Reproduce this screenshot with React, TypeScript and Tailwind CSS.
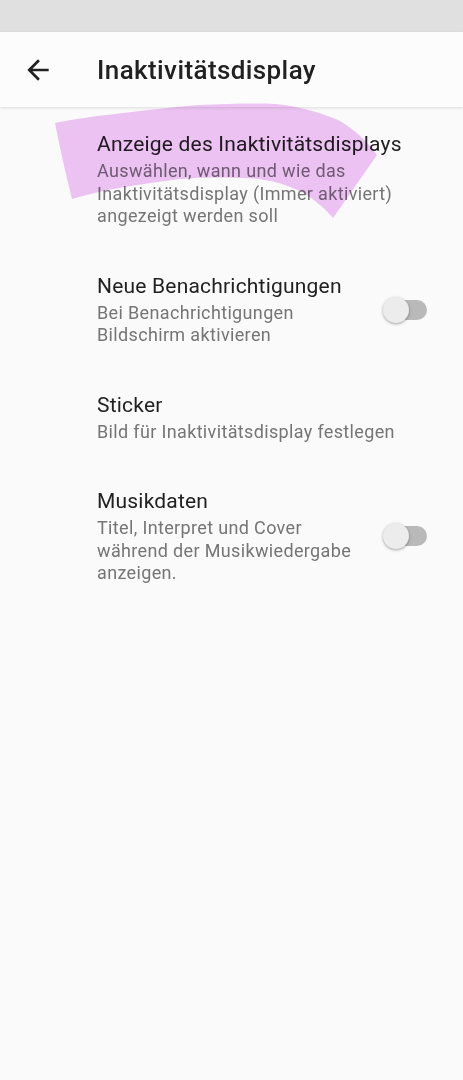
import React from "react";

function Toggle() {
  return (
    <div className="relative w-[44px] h-[26px] ml-[16px] shrink-0 flex items-center">
      <div className="absolute left-[8px] right-0 h-[20px] rounded-full bg-[#b9b9b9]" />
      <div className="absolute left-0 top-0 w-[26px] h-[26px] rounded-full bg-[#ececec] shadow-[0_1px_3px_rgba(0,0,0,0.35)]" />
    </div>
  );
}

function Item({ title, sub, toggle }: { title: string; sub: string[]; toggle?: boolean }) {
  return (
    <div className="flex items-center pl-[97px] pr-[36px] py-[22.5px]">
      <div className="flex-1 min-w-0">
        <div className="text-[21px] leading-[26px] tracking-[0.2px] text-[#212121]">{title}</div>
        <div className="mt-[3px] text-[18px] leading-[22.5px] tracking-[0.35px] text-[#757575]">
          {sub.map((s, i) => (
            <div key={i} className="whitespace-nowrap">{s}</div>
          ))}
        </div>
      </div>
      {toggle && <Toggle />}
    </div>
  );
}

export default function App() {
  return (
    <div
      className="relative w-[463px] h-[1080px] bg-[#fafafa] overflow-hidden"
      style={{ fontFamily: "Roboto, 'Noto Sans', sans-serif" }}
    >
      <div className="h-[32px] bg-[#e0e0e0]" />
      <div className="relative z-10 h-[75px] bg-[#fcfcfc] flex items-center shadow-[0_1px_3px_rgba(0,0,0,0.12)]">
        <div className="w-[97px] flex items-center">
          <svg width="32" height="32" viewBox="0 0 24 24" className="ml-[22px]">
            <path
              d="M20 11H7.83l5.59-5.59L12 4l-8 8 8 8 1.41-1.41L7.83 13H20v-2z"
              fill="#212121"
            />
          </svg>
        </div>
        <div className="text-[26px] leading-[30px] font-medium tracking-[0.4px] text-[#212121]">Inaktivitätsdisplay</div>
      </div>
      <div className="pt-[1.5px]">
        <Item
          title="Anzeige des Inaktivitätsdisplays"
          sub={["Auswählen, wann und wie das", "Inaktivitätsdisplay (Immer aktiviert)", "angezeigt werden soll"]}
        />
        <Item
          title="Neue Benachrichtigungen"
          sub={["Bei Benachrichtigungen", "Bildschirm aktivieren"]}
          toggle
        />
        <Item title="Sticker" sub={["Bild für Inaktivitätsdisplay festlegen"]} />
        <Item
          title="Musikdaten"
          sub={["Titel, Interpret und Cover", "während der Musikwiedergabe", "anzeigen."]}
          toggle
        />
      </div>
      <svg
        className="absolute left-0 top-0 pointer-events-none z-20 mix-blend-multiply"
        width="463"
        height="260"
        viewBox="0 0 463 260"
      >
        <path
          d="M55,123 C75,119 95,116 107,115 C140,111 173,107 200,105 C225,104 257,103 275,104 C300,106 325,114 340,121 C355,130 368,142 377,155 L333,218 C320,203 305,192 290,187 C275,181 258,178 240,178 C210,177 190,178 173,180 C140,184 120,188 107,190 C95,193 82,196 72,199 C66,175 60,148 55,123 Z"
          fill="#f0c6f6"
        />
      </svg>
    </div>
  );
}
